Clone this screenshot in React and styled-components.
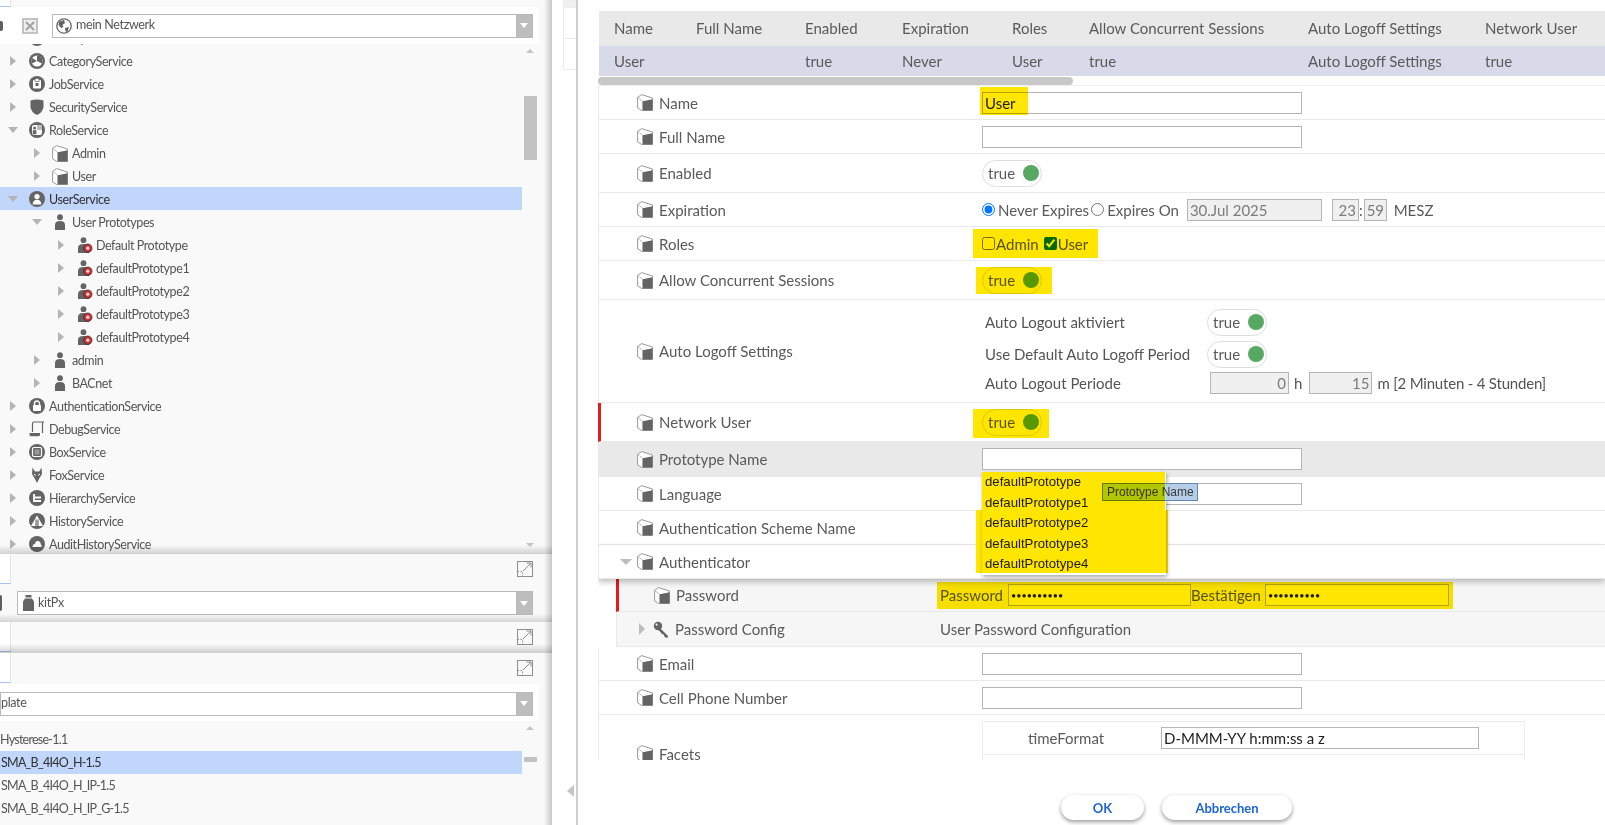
import React from 'react';
import styled, { createGlobalStyle } from 'styled-components';

const GlobalStyle = createGlobalStyle`
  html, body {
    margin: 0;
    padding: 0;
    height: 100%;
    overflow: hidden;
    background: #ffffff;
    font-family: Lato, "Noto Sans", sans-serif;
    color: #555555;
  }
  * {
    box-sizing: border-box;
  }
`;

const Page = styled.div`
  display: flex;
  width: 1605px;
  height: 825px;
  overflow: hidden;
`;

/* ---------- left side ---------- */

const Sidebar = styled.div`
  position: relative;
  flex: none;
  width: 552px;
  height: 825px;
  display: flex;
  flex-direction: column;
  background: #f9f9f9;
  &::after {
    content: '';
    position: absolute;
    top: 0;
    right: 0;
    bottom: 0;
    width: 8px;
    background: linear-gradient(to right, rgba(0, 0, 0, 0), rgba(0, 0, 0, 0.2));
  }
`;

const TopStrip = styled.div`
  height: 7px;
  flex: none;
`;

const StubTab = styled.div`
  width: 11px;
  height: 100%;
  background: #ffffff;
  border-right: 1px solid #e4e4e4;
  border-bottom: 1px solid #a9c4ee;
`;

const Toolbar = styled.div`
  position: relative;
  flex: none;
  width: 539px;
  height: ${(p) => p.$height}px;
  display: flex;
  align-items: center;
  background: #ffffff;
  padding-top: ${(p) => p.$top || 0}px;
  ${(p) => p.$shade && `
    width: 100%;
    background: #f9f9f9;
    &::after {
      content: '';
      position: absolute;
      left: 0;
      right: 0;
      bottom: 0;
      height: 8px;
      background: linear-gradient(to bottom, rgba(0, 0, 0, 0), rgba(0, 0, 0, 0.15));
    }
  `}
`;

const CutOff = styled.div`
  flex: none;
  width: ${(p) => p.$width}px;
  height: ${(p) => p.$h}px;
  margin-right: ${(p) => p.$gap}px;
  background: #5f5f5f;
  border-radius: 0 2px 2px 0;
`;

const CloseBox = styled.div`
  width: 16px;
  height: 16px;
  margin-right: 14px;
  border: 2px solid #c2c2c2;
  display: flex;
  align-items: center;
  justify-content: center;
  background: #eeeeee;
`;

const Combo = styled.div`
  width: ${(p) => p.$width}px;
  height: ${(p) => p.$h}px;
  display: flex;
  align-items: center;
  gap: 4px;
  background: #ffffff;
  border: 1px solid #b9b9b9;
  padding-left: ${(p) => p.$pad}px;
  font-size: 12.5px;
  letter-spacing: -0.35px;
  color: #555555;
`;

const ComboText = styled.span`
  flex: 1;
  position: relative;
  top: -1px;
`;

const ComboButton = styled.div`
  width: 16px;
  height: 100%;
  background: #bdbdbd;
  display: flex;
  align-items: center;
  justify-content: center;
  &::before {
    content: '';
    border-left: 4px solid transparent;
    border-right: 4px solid transparent;
    border-top: 5px solid #ffffff;
  }
`;

const TreePane = styled.div`
  position: relative;
  flex: none;
  height: 510px;
  display: flex;
  overflow: hidden;
  &::after {
    content: '';
    position: absolute;
    left: 0;
    right: 0;
    bottom: 0;
    height: 9px;
    background: linear-gradient(to bottom, rgba(0, 0, 0, 0), rgba(0, 0, 0, 0.16));
  }
`;

const TreeList = styled.div`
  width: 522px;
  flex: none;
  margin-top: -18px;
`;

const TreeRow = styled.div`
  height: 23px;
  display: flex;
  align-items: center;
  padding-left: ${(p) => 10 + p.$level * 24}px;
  padding-top: 1px;
  font-size: 12.5px;
  letter-spacing: -0.42px;
  white-space: nowrap;
  background: ${(p) => (p.$selected ? '#c1d6fb' : 'transparent')};
  color: ${(p) => (p.$selected ? '#2f2f2f' : '#555555')};
`;

const Twist = styled.span`
  flex: none;
  width: 13px;
  margin-right: ${(p) => p.$gap}px;
  display: flex;
  justify-content: flex-start;
  ${(p) => (p.$open ? `
    &::before {
      content: '';
      margin-left: -2px;
      border-left: 5px solid transparent;
      border-right: 5px solid transparent;
      border-top: 6px solid #b4b4b4;
    }
  ` : `
    &::before {
      content: '';
      border-top: 5px solid transparent;
      border-bottom: 5px solid transparent;
      border-left: 6px solid #b4b4b4;
    }
  `)}
`;

const TreeIcon = styled.span`
  flex: none;
  width: 16px;
  height: 16px;
  margin-right: ${(p) => p.$gap}px;
  display: flex;
`;

const ScrollColumn = styled.div`
  position: relative;
  flex: 1;
  min-width: 14px;
`;

const ScrollArrow = styled.div`
  position: absolute;
  left: 4px;
  ${(p) => (p.$down ? 'bottom: 7px;' : 'top: 5px;')}
  border-left: 4px solid transparent;
  border-right: 4px solid transparent;
  ${(p) => (p.$down ? 'border-top: 4px solid #c4c4c4;' : 'border-bottom: 4px solid #c4c4c4;')}
`;

const ScrollThumb = styled.div`
  position: absolute;
  left: 2px;
  top: ${(p) => p.$top}px;
  width: 13px;
  height: ${(p) => p.$h}px;
  background: #c2c2c2;
`;

const ExpandBar = styled.div`
  position: relative;
  flex: none;
  height: ${(p) => p.$h}px;
  display: flex;
  justify-content: space-between;
  align-items: flex-start;
  padding-right: 19px;
  padding-top: 7px;
  ${(p) => p.$shade && `
    &::after {
      content: '';
      position: absolute;
      left: 0;
      right: 0;
      bottom: 0;
      height: 9px;
      background: linear-gradient(to bottom, rgba(0, 0, 0, 0), rgba(0, 0, 0, 0.18));
    }
  `}
`;

const PaneTab = styled.div`
  width: 11px;
  height: 30px;
  margin-top: -7px;
  background: #ffffff;
  border-right: 1px solid #e4e4e4;
  border-bottom: 1px solid #a9c4ee;
`;

const FileList = styled.div`
  flex: 1;
  display: flex;
`;

const FileRows = styled.div`
  width: 522px;
  flex: none;
  padding-top: 7px;
`;

const FileRow = styled.div`
  height: 23px;
  display: flex;
  align-items: center;
  padding-left: ${(p) => p.$pad}px;
  font-size: 12.5px;
  letter-spacing: -0.75px;
  background: ${(p) => (p.$selected ? '#c1d6fb' : 'transparent')};
  color: ${(p) => (p.$selected ? '#2f2f2f' : '#555555')};
`;

/* ---------- gutter between the panes ---------- */

const Gutter = styled.div`
  flex: none;
  width: 26px;
  height: 825px;
  display: flex;
  flex-direction: column;
  border-right: 2px solid #cfcfcf;
`;

const GutterCell = styled.div`
  height: ${(p) => p.$h}px;
  margin-left: 11px;
  border-left: 1px solid #ececec;
  border-bottom: 1px solid #ececec;
  background: ${(p) => p.$bg};
`;

const CollapseArrow = styled.div`
  width: 0;
  margin: auto 0 28px 15px;
  border-top: 6px solid transparent;
  border-bottom: 6px solid transparent;
  border-right: 7px solid #c4c4c4;
`;

/* ---------- main form ---------- */

const Main = styled.div`
  flex: none;
  width: 1027px;
  height: 825px;
  display: flex;
  flex-direction: column;
  padding: 11px 0 0 21px;
`;

const SummaryGrid = styled.div`
  flex: none;
  display: grid;
  grid-template-columns: 82px 109px 97px 110px 77px 219px 177px 1fr;
  grid-auto-rows: min-content;
  padding-left: 15px;
  font-size: 15px;
  color: #5a5a5a;
  background: ${(p) => p.$bg};
  height: ${(p) => p.$h}px;
  align-items: center;
  white-space: nowrap;
`;

const SummaryCell = styled.span`
  line-height: ${(p) => p.$h}px;
`;

const HScroll = styled.div`
  flex: none;
  height: 9px;
  padding-top: 1px;
`;

const HThumb = styled.div`
  width: 475px;
  height: 8px;
  margin-left: -1px;
  border-radius: 4px;
  background: #c8c8c8;
`;

const FormArea = styled.div`
  flex: none;
  height: 675px;
  overflow: hidden;
  border-top: 1px solid #eeeeee;
  margin-left: -1px;
`;

const Row = styled.div`
  position: relative;
  display: grid;
  grid-template-columns: ${(p) => p.$label || 383}px 1fr;
  align-items: center;
  height: ${(p) => p.$h}px;
  border-bottom: 1px solid #e9e9e9;
  border-left: ${(p) => (p.$alert ? '3px solid #e21b1b' : '1px solid #e9e9e9')};
  background: ${(p) => p.$bg || '#ffffff'};
  ${(p) => p.$raised && `
    z-index: 1;
    box-shadow: 0 3px 6px rgba(0, 0, 0, 0.25);
  `}
`;

const LabelCell = styled.div`
  display: flex;
  align-items: center;
  gap: 6px;
  padding-left: ${(p) => p.$pad}px;
  font-size: 15px;
  color: #5a5a5a;
  white-space: nowrap;
`;

const FormTwist = styled.span`
  flex: none;
  width: 14px;
  margin-left: -20px;
  display: flex;
  ${(p) => (p.$open ? `
    &::before {
      content: '';
      margin-left: 3px;
      border-left: 6px solid transparent;
      border-right: 6px solid transparent;
      border-top: 6px solid #bdbdbd;
    }
  ` : `
    &::before {
      content: '';
      margin-left: 6px;
      border-top: 6px solid transparent;
      border-bottom: 6px solid transparent;
      border-left: 6px solid #bdbdbd;
    }
  `)}
`;

const ValueCell = styled.div`
  display: flex;
  align-items: center;
  font-size: 15px;
  color: #5a5a5a;
  white-space: nowrap;
`;

const FacetCell = styled(ValueCell)`
  align-self: start;
  padding-top: 6px;
`;

const SubGroup = styled.div`
  margin-left: 18px;
`;

const TextBox = styled.input`
  display: block;
  width: ${(p) => p.$width || 320}px;
  height: 22px;
  padding: 0 2px;
  margin: ${(p) => p.$margin || 0};
  border: 1px solid #b5b5b5;
  border-radius: 0;
  outline: none;
  background: ${(p) => (p.disabled ? '#f0f0f0' : '#ffffff')};
  font-family: Lato, "Noto Sans", sans-serif;
  font-size: ${(p) => p.$size || 15}px;
  color: ${(p) => (p.disabled ? '#7c7c7c' : '#222222')};
  text-align: ${(p) => p.$align || 'left'};
`;

const Marked = styled.div`
  position: relative;
  display: inline-flex;
  align-items: center;
  &::after {
    content: '';
    position: absolute;
    inset: ${(p) => p.$inset};
    background: #ffe600;
    mix-blend-mode: multiply;
    pointer-events: none;
  }
`;

const Toggle = styled.div`
  width: 60px;
  height: 27px;
  display: flex;
  align-items: center;
  justify-content: space-between;
  padding: 0 2px 0 5px;
  border: 1px solid #dddddd;
  border-radius: 14px;
  background: #ffffff;
  font-size: 15px;
  color: #5a5a5a;
  &::after {
    content: '';
    width: 16px;
    height: 16px;
    border-radius: 50%;
    background: #57a863;
  }
`;

const Choice = styled.label`
  display: inline-flex;
  align-items: center;
  gap: ${(p) => p.$inner || 3}px;
  margin-right: ${(p) => p.$gap || 0}px;
  input {
    margin: 0;
    width: 13px;
    height: 13px;
  }
`;

const Unit = styled.span`
  margin: ${(p) => p.$margin};
  letter-spacing: ${(p) => p.$tight || 0}px;
`;

const NestedStack = styled.div`
  display: flex;
  flex-direction: column;
  margin-left: 3px;
`;

const NestedRow = styled.div`
  display: grid;
  grid-template-columns: 222px 1fr;
  align-items: center;
  height: ${(p) => p.$h}px;
  font-size: 15px;
`;

const NestedValue = styled.div`
  display: flex;
  align-items: center;
`;

const PromptInput = styled.div`
  position: relative;
`;

const Popup = styled.div`
  position: absolute;
  top: calc(100% + 2px);
  left: 0;
  width: 184px;
  height: 103px;
  z-index: 5;
  background: #ffffff;
  box-shadow: 1px 2px 4px rgba(0, 0, 0, 0.35);
  font-family: "Liberation Sans", Arial, sans-serif;
  font-size: 13.2px;
  color: #222222;
  &::before {
    content: '';
    position: absolute;
    z-index: 1;
    top: 0;
    left: 0;
    right: 1px;
    height: 38px;
    background: #ffe600;
    mix-blend-mode: multiply;
  }
  &::after {
    content: '';
    position: absolute;
    z-index: 1;
    top: 38px;
    left: -6px;
    right: -2px;
    bottom: 2px;
    background: #ffe600;
    mix-blend-mode: multiply;
  }
`;

const PopupItem = styled.div`
  height: 20.6px;
  line-height: 20.6px;
  padding-left: 3px;
`;

const Tip = styled.div`
  position: absolute;
  left: 120px;
  top: 11px;
  width: 96px;
  height: 18px;
  line-height: 16px;
  padding-left: 4px;
  background: linear-gradient(to right, #b0dcf0 0 63px, #b5cde8 63px);
  border: 1px solid #6485b8;
  font-size: 12px;
  color: #3a3a3a;
  white-space: nowrap;
`;

const FacetTable = styled.div`
  width: 543px;
  border: 1px solid #ededed;
`;

const FacetRow = styled.div`
  display: grid;
  grid-template-columns: 180px 1fr;
  align-items: center;
  height: 33px;
  padding-left: 45px;
  border-bottom: 1px solid #ededed;
  font-size: 15px;
`;

const Footer = styled.div`
  flex: none;
  display: flex;
  gap: 18px;
  padding: 35px 0 0 462px;
`;

const PillButton = styled.button`
  width: ${(p) => p.$width}px;
  height: 25px;
  border: none;
  border-radius: 13px;
  background: #ffffff;
  box-shadow: 0 2px 4px rgba(0, 0, 0, 0.4);
  font-family: Lato, "Noto Sans", sans-serif;
  font-size: 13px;
  font-weight: 700;
  color: #1f64d6;
`;

/* ---------- drawings ---------- */

const Dark = '#646464';

const Circle = ({ children }) => (
  <svg width="16" height="16" viewBox="0 0 16 16">
    <circle cx="8" cy="8" r="8" fill={Dark} />
    {children}
  </svg>
);

const glyphs = {
  category: (
    <Circle>
      <circle cx="8" cy="8" r="5.6" fill="#fff" />
      <path d="M8 8 L8 2.4 A5.6 5.6 0 0 1 13 10.5Z M8 8 L3 10.5 A5.6 5.6 0 0 1 3.2 5Z" fill={Dark} />
    </Circle>
  ),
  job: (
    <Circle>
      <rect x="4" y="4" width="8" height="8.5" rx="1" fill="#fff" />
      <rect x="6" y="2.5" width="4" height="3" fill="#fff" stroke={Dark} strokeWidth=".7" />
      <rect x="6.5" y="7" width="3" height="3" fill={Dark} />
    </Circle>
  ),
  shield: (
    <svg width="16" height="16" viewBox="0 0 16 16">
      <path d="M1.5 1.5 Q8 -.5 14.5 1.5 L14.5 8 Q14 13 8 16 Q2 13 1.5 8Z" fill={Dark} />
    </svg>
  ),
  role: (
    <Circle>
      <rect x="3" y="3" width="10" height="10" rx="2" fill="#fff" />
      <rect x="8" y="3" width="5" height="5" fill="#bbb" />
      <circle cx="5.6" cy="6" r="1.5" fill={Dark} />
      <rect x="3.8" y="8.2" width="3.6" height="4" fill={Dark} />
    </Circle>
  ),
  user: (
    <Circle>
      <circle cx="8" cy="5.6" r="2.6" fill="#fff" />
      <path d="M3.6 13.5 Q4 8.8 8 8.8 Q12 8.8 12.4 13.5Z" fill="#fff" />
    </Circle>
  ),
  lock: (
    <Circle>
      <rect x="4" y="7" width="8" height="6" rx="1" fill="#fff" />
      <path d="M5.5 7.5 V5.5 a2.5 2.5 0 0 1 5 0 V7.5" fill="none" stroke="#fff" strokeWidth="1.4" />
    </Circle>
  ),
  debug: (
    <svg width="16" height="16" viewBox="0 0 16 16">
      <path d="M3.5 11 V2.5 Q3.5 1 5 1 H15 Q13.5 1 13.5 2.5 V12" fill="none" stroke={Dark} strokeWidth="1.2" />
      <path d="M0.5 12 H11 V13.5 Q11 15.2 9.5 15.2 H2 Q0.5 15.2 0.5 13.5Z" fill={Dark} />
    </svg>
  ),
  box: (
    <Circle>
      <rect x="3.5" y="3.5" width="9" height="9" rx="1.5" fill="none" stroke="#fff" strokeWidth="1.2" />
      <rect x="5.5" y="5.5" width="5" height="5" fill="#999" />
    </Circle>
  ),
  fox: (
    <svg width="16" height="16" viewBox="0 0 16 16">
      <path d="M3.5 0.5 L5.8 4.5 H10.2 L12.5 0.5 L13 7 L10.5 11 L8 16 L5.5 11 L3 7Z" fill={Dark} />
      <path d="M5 7 L7 8.5 M11 7 L9 8.5" stroke="#fff" strokeWidth="1" />
    </svg>
  ),
  hierarchy: (
    <Circle>
      <path d="M5 4 V11 H12 M5 7.5 H12" fill="none" stroke="#fff" strokeWidth="1.8" />
    </Circle>
  ),
  history: (
    <Circle>
      <path d="M8 2.5 L14 13 H2Z" fill="#fff" />
      <rect x="6.2" y="6.5" width="3.6" height="6.5" fill="#999" />
    </Circle>
  ),
  audit: (
    <Circle>
      <path d="M3.5 11 Q3.5 8 6 8 Q6.5 4.5 9 5 Q12 5.5 11.5 8 Q13 8.5 12.5 11Z" fill="#fff" />
    </Circle>
  ),
};

const PersonGlyph = ({ badge }) => (
  <svg width="16" height="16" viewBox="0 0 16 16">
    <circle cx={badge ? 6.5 : 8} cy="3.2" r="2.9" fill={Dark} />
    <path
      d={badge ? 'M1 16 V11 Q1 7 6.5 7 Q12 7 12 11 V16Z' : 'M3 16 V11 Q3 7 8 7 Q13 7 13 11 V16Z'}
      fill={Dark}
    />
    {badge && (
      <>
        <circle cx="10.8" cy="11.2" r="4.2" fill="#c8353a" stroke="#222" strokeWidth=".7" />
        <circle cx="10.8" cy="11.2" r="1.6" fill="#f3d6d6" />
      </>
    )}
  </svg>
);

const Cube = () => (
  <svg width="16" height="17" viewBox="0 0 16 17">
    <path d="M.6 3.4 L4.6 .6 L15.4 4 V16.4 H4.6 L.6 13.8Z" fill="#ffffff" stroke="#8d8d8d" strokeWidth=".9" />
    <path d="M.6 3.4 L5.5 7 V16" fill="none" stroke="#b0b0b0" strokeWidth=".8" />
    <path d="M5.8 7.2 L15.6 5.2 V16.6 H5.8Z" fill={Dark} />
  </svg>
);

const KeyGlyph = () => (
  <svg width="16" height="17" viewBox="0 0 16 17">
    <circle cx="5" cy="5" r="4.2" fill={Dark} />
    <circle cx="3.6" cy="3.6" r="1.1" fill="#f6f6f6" />
    <path d="M7 7 L15 15 V16.5 H12.5 L11 15 V13.5 H9.5 L5.5 9Z" fill={Dark} />
  </svg>
);

const treeIcons = {
  ...glyphs,
  cube: <Cube />,
  person: <PersonGlyph />,
  proto: <PersonGlyph badge />,
};

const ExpandGlyph = () => (
  <svg width="16" height="16" viewBox="0 0 16 16">
    <rect x=".5" y=".5" width="15" height="15" fill="none" stroke="#8e8e8e" />
    <path d="M.5 10.5 H5.5 V15.5" fill="none" stroke="#8e8e8e" strokeDasharray="1.5 1.5" />
    <path d="M6 10 L14 2 M9.5 2 H14 V6.5" fill="none" stroke="#8e8e8e" />
  </svg>
);

const GlobeGlyph = () => (
  <svg width="16" height="16" viewBox="0 0 16 16">
    <circle cx="8" cy="8" r="7.2" fill="#fff" stroke={Dark} strokeWidth="1.3" />
    <path d="M3 3.5 L8 2 L9 5 L6.5 7 L7.5 9 L5 10 L2.5 7Z M9 10 L13 9 L11.5 14 L9.5 13.5Z" fill={Dark} />
  </svg>
);

const JarGlyph = () => (
  <svg width="11" height="16" viewBox="0 0 11 16">
    <rect x="2.5" y="0" width="6" height="2.5" fill={Dark} />
    <path d="M2 3.5 H9 L11 6.5 V16 H0 V6.5Z" fill={Dark} />
  </svg>
);

const XGlyph = () => (
  <svg width="10" height="10" viewBox="0 0 10 10">
    <path d="M1 1 L9 9 M9 1 L1 9" stroke="#a2a2a2" strokeWidth="2" />
  </svg>
);

/* ---------- data ---------- */

const treeRows = [
  { level: 0, icon: 'user', label: 'BackupService' },
  { level: 0, icon: 'category', label: 'CategoryService' },
  { level: 0, icon: 'job', label: 'JobService' },
  { level: 0, icon: 'shield', label: 'SecurityService' },
  { level: 0, icon: 'role', label: 'RoleService', open: true },
  { level: 1, icon: 'cube', label: 'Admin' },
  { level: 1, icon: 'cube', label: 'User' },
  { level: 0, icon: 'user', label: 'UserService', open: true, selected: true },
  { level: 1, icon: 'person', label: 'User Prototypes', open: true },
  { level: 2, icon: 'proto', label: 'Default Prototype' },
  { level: 2, icon: 'proto', label: 'defaultPrototype1' },
  { level: 2, icon: 'proto', label: 'defaultPrototype2' },
  { level: 2, icon: 'proto', label: 'defaultPrototype3' },
  { level: 2, icon: 'proto', label: 'defaultPrototype4' },
  { level: 1, icon: 'person', label: 'admin' },
  { level: 1, icon: 'person', label: 'BACnet' },
  { level: 0, icon: 'lock', label: 'AuthenticationService' },
  { level: 0, icon: 'debug', label: 'DebugService' },
  { level: 0, icon: 'box', label: 'BoxService' },
  { level: 0, icon: 'fox', label: 'FoxService' },
  { level: 0, icon: 'hierarchy', label: 'HierarchyService' },
  { level: 0, icon: 'history', label: 'HistoryService' },
  { level: 0, icon: 'audit', label: 'AuditHistoryService' },
];

const summaryHead = ['Name', 'Full Name', 'Enabled', 'Expiration', 'Roles', 'Allow Concurrent Sessions', 'Auto Logoff Settings', 'Network User'];
const summaryRow = ['User', '', 'true', 'Never', 'User', 'true', 'Auto Logoff Settings', 'true'];
const prototypes = ['defaultPrototype', 'defaultPrototype1', 'defaultPrototype2', 'defaultPrototype3', 'defaultPrototype4'];

const Label = ({ text, pad = 38, twist, open, glyph }) => (
  <LabelCell $pad={pad}>
    {twist && <FormTwist $open={open} />}
    {glyph || <Cube />}
    {text}
  </LabelCell>
);

const App = () => (
  <Page>
    <GlobalStyle />
    <Sidebar>
      <TopStrip>
        <StubTab />
      </TopStrip>
      <Toolbar $height={37}>
        <CutOff $width={3} $h={10} $gap={19} />
        <CloseBox>
          <XGlyph />
        </CloseBox>
        <Combo $width={481} $h={24} $pad={3}>
          <GlobeGlyph />
          <ComboText>mein Netzwerk</ComboText>
          <ComboButton />
        </Combo>
      </Toolbar>
      <TreePane>
        <TreeList>
          {treeRows.map((row) => (
            <TreeRow key={row.label} $level={row.level} $selected={row.selected}>
              <Twist $open={row.open} $gap={row.level === 1 ? 5 : 6} />
              <TreeIcon $gap={row.level === 2 ? 3 : 4}>{treeIcons[row.icon]}</TreeIcon>
              {row.label}
            </TreeRow>
          ))}
        </TreeList>
        <ScrollColumn>
          <ScrollArrow />
          <ScrollThumb $top={52} $h={64} />
          <ScrollArrow $down />
        </ScrollColumn>
      </TreePane>
      <ExpandBar $h={30}>
        <PaneTab />
        <ExpandGlyph />
      </ExpandBar>
      <Toolbar $height={38} $shade>
        <CutOff $width={2} $h={16} $gap={15} />
        <Combo $width={516} $h={24} $pad={5}>
          <JarGlyph />
          <ComboText>kitPx</ComboText>
          <ComboButton />
        </Combo>
      </Toolbar>
      <ExpandBar $h={31} $shade>
        <PaneTab />
        <ExpandGlyph />
      </ExpandBar>
      <ExpandBar $h={31}>
        <PaneTab />
        <ExpandGlyph />
      </ExpandBar>
      <Toolbar $height={37} $top={2}>
        <Combo $width={533} $h={24} $pad={0}>
          <ComboText>plate</ComboText>
          <ComboButton />
        </Combo>
      </Toolbar>
      <FileList>
        <FileRows>
          <FileRow $pad={0}>Hysterese-1.1</FileRow>
          <FileRow $pad={1} $selected>SMA_B_4I4O_H-1.5</FileRow>
          <FileRow $pad={1}>SMA_B_4I4O_H_IP-1.5</FileRow>
          <FileRow $pad={1}>SMA_B_4I4O_H_IP_G-1.5</FileRow>
        </FileRows>
        <ScrollColumn>
          <ScrollArrow />
          <ScrollThumb $top={36} $h={5} />
        </ScrollColumn>
      </FileList>
    </Sidebar>

    <Gutter>
      <GutterCell $h={8} $bg="#f0f0f0" />
      <GutterCell $h={31} $bg="#ffffff" />
      <GutterCell $h={31} $bg="#ffffff" />
      <CollapseArrow />
    </Gutter>

    <Main>
      <SummaryGrid $bg="#e9e9e9" $h={35}>
        {summaryHead.map((text) => (
          <SummaryCell key={text} $h={35}>{text}</SummaryCell>
        ))}
      </SummaryGrid>
      <SummaryGrid $bg="#d8daea" $h={30}>
        {summaryRow.map((text, i) => (
          <SummaryCell key={i} $h={30}>{text}</SummaryCell>
        ))}
      </SummaryGrid>
      <HScroll>
        <HThumb />
      </HScroll>
      <FormArea>
        <Row $h={34}>
          <Label text="Name" />
          <ValueCell>
            <Marked $inset="-5px 274px -1px -2px">
              <TextBox readOnly value="User" />
            </Marked>
          </ValueCell>
        </Row>
        <Row $h={34}>
          <Label text="Full Name" />
          <ValueCell><TextBox readOnly value="" /></ValueCell>
        </Row>
        <Row $h={39}>
          <Label text="Enabled" />
          <ValueCell><Toggle>true</Toggle></ValueCell>
        </Row>
        <Row $h={34}>
          <Label text="Expiration" />
          <ValueCell>
            <Choice $gap={2}><input type="radio" name="exp" defaultChecked />Never Expires</Choice>
            <Choice><input type="radio" name="exp" />Expires On</Choice>
            <TextBox disabled value="30.Jul 2025" $width={135} $margin="0 0 0 8px" />
            <TextBox disabled value="23" $width={27} $margin="0 0 0 10px" $align="right" />
            <Unit $margin="0 1px 0 0">:</Unit>
            <TextBox disabled value="59" $width={23} $align="right" />
            <Unit $margin="0 0 0 7px">MESZ</Unit>
          </ValueCell>
        </Row>
        <Row $h={34}>
          <Label text="Roles" />
          <ValueCell>
            <Marked $inset="-6px -10px -5px -9px">
              <Choice $gap={5} $inner={1}><input type="checkbox" readOnly />Admin</Choice>
              <Choice $inner={1}><input type="checkbox" defaultChecked />User</Choice>
            </Marked>
          </ValueCell>
        </Row>
        <Row $h={39}>
          <Label text="Allow Concurrent Sessions" />
          <ValueCell>
            <Marked $inset="0 -10px 0 -6px"><Toggle>true</Toggle></Marked>
          </ValueCell>
        </Row>
        <Row $h={103}>
          <Label text="Auto Logoff Settings" />
          <NestedStack>
            <NestedRow $h={32}>
              Auto Logout aktiviert
              <NestedValue><Toggle>true</Toggle></NestedValue>
            </NestedRow>
            <NestedRow $h={32}>
              Use Default Auto Logoff Period
              <NestedValue><Toggle>true</Toggle></NestedValue>
            </NestedRow>
            <NestedRow $h={26}>
              Auto Logout Periode
              <NestedValue>
                <TextBox disabled value="0" $width={79} $margin="0 0 0 3px" $align="right" />
                <Unit $margin="0 7px 0 5px">h</Unit>
                <TextBox disabled value="15" $width={63} $align="right" />
                <Unit $margin="0 0 0 5px" $tight={-0.2}>m [2 Minuten - 4 Stunden]</Unit>
              </NestedValue>
            </NestedRow>
          </NestedStack>
        </Row>
        <Row $h={39} $alert $label={381}>
          <Label text="Network User" pad={36} />
          <ValueCell>
            <Marked $inset="0 -7px -2px -9px"><Toggle>true</Toggle></Marked>
          </ValueCell>
        </Row>
        <Row $h={35} $bg="#e9e9e9">
          <Label text="Prototype Name" />
          <ValueCell>
            <PromptInput>
              <TextBox readOnly value="" />
              <Popup>
                {prototypes.map((name) => (
                  <PopupItem key={name}>{name}</PopupItem>
                ))}
                <Tip>Prototype Name</Tip>
              </Popup>
            </PromptInput>
          </ValueCell>
        </Row>
        <Row $h={34}>
          <Label text="Language" />
          <ValueCell><TextBox readOnly value="" /></ValueCell>
        </Row>
        <Row $h={34}>
          <Label text="Authentication Scheme Name" />
          <ValueCell />
        </Row>
        <Row $h={34} $raised>
          <Label text="Authenticator" twist open />
          <ValueCell />
        </Row>
        <SubGroup>
          <Row $h={33} $alert $bg="#f6f6f6" $label={321}>
            <Label text="Password" pad={35} />
            <ValueCell>
              <Marked $inset="-2px -4px -3px -3px">
                Password
                <TextBox readOnly type="password" value="1234567890" $width={183} $size={9} $margin="0 0 0 5px" />
                <Unit $margin="0">Bestätigen</Unit>
                <TextBox readOnly type="password" value="1234567890" $width={184} $size={9} $margin="0 0 0 4px" />
              </Marked>
            </ValueCell>
          </Row>
          <Row $h={35} $bg="#f6f6f6" $label={323}>
            <Label text="Password Config" pad={36} twist glyph={<KeyGlyph />} />
            <ValueCell>User Password Configuration</ValueCell>
          </Row>
        </SubGroup>
        <Row $h={34}>
          <Label text="Email" />
          <ValueCell><TextBox readOnly value="" /></ValueCell>
        </Row>
        <Row $h={34}>
          <Label text="Cell Phone Number" />
          <ValueCell><TextBox readOnly value="" /></ValueCell>
        </Row>
        <Row $h={78}>
          <Label text="Facets" />
          <FacetCell>
            <FacetTable>
              <FacetRow>
                timeFormat
                <TextBox readOnly value="D-MMM-YY h:mm:ss a z" $width={318} $margin="0 0 0 -47px" />
              </FacetRow>
              <FacetRow />
            </FacetTable>
          </FacetCell>
        </Row>
      </FormArea>
      <Footer>
        <PillButton $width={83}>OK</PillButton>
        <PillButton $width={130}>Abbrechen</PillButton>
      </Footer>
    </Main>
  </Page>
);

export default App;
